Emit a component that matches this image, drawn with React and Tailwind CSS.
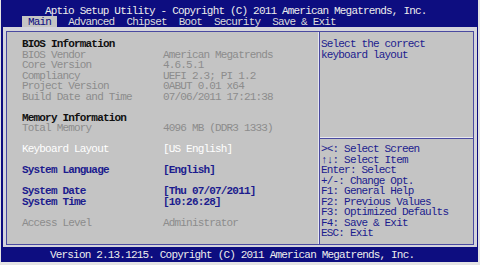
import React from "react";

const Row = ({ children, className = "" }) => (
  <div className={"h-[10.5px] leading-[10.5px] whitespace-pre " + className}>{children}</div>
);

const Item = ({ label, value, lc, vc, extra }) => (
  <div className="flex h-[10.5px] leading-[10.5px] whitespace-pre">
    <div className={"w-[141px] " + lc}>{label}</div>
    <div className={vc}>{value}{extra}</div>
  </div>
);

export default function App() {
  const dim = "text-[#8c8c8c]";
  const blue = "text-[#1c1c8e] font-bold";
  return (
    <div className="w-[480px] h-[265px] bg-[#e4e4e4] pl-px pr-[2px] pb-[3px] font-['Liberation_Mono','DejaVu_Sans_Mono',monospace] text-[11px] tracking-[-0.82px]">
      <div className="h-full bg-[#0d0d80] flex flex-col">
        <div className="h-[16px] pt-[6px] pl-[44px] leading-[11px] text-[#ececec] whitespace-pre">
          Aptio Setup Utility - Copyright (C) 2011 American Megatrends, Inc.
        </div>
        <div className="h-[11px] flex pl-[21px] leading-[12px] text-[#dcdcdc] whitespace-pre">
          <span className="bg-[#c4c4c4] text-[#0d0d80] px-[6px] h-[11px]">Main</span>
          <span className="ml-[11px]">Advanced</span>
          <span className="ml-[12px]">Chipset</span>
          <span className="ml-[12px]">Boot</span>
          <span className="ml-[12px]">Security</span>
          <span className="ml-[12px]">Save &amp; Exit</span>
        </div>
        <div className="flex-1 ml-[2px] mr-px bg-[#d4d4dc] pt-[4px] pb-[2px] pl-[3px] pr-[3px] flex">
          <div className="flex-1 border border-[#4a4aa0] bg-[#c4c4c4] flex">
            <div className="w-[311px] pl-[15px] pt-[7px]">
              <Row className="text-[#111111] font-bold">BIOS Information</Row>
              <Item label="BIOS Vendor" value="American Megatrends" lc={dim} vc={dim} />
              <Item label="Core Version" value="4.6.5.1" lc={dim} vc={dim} />
              <Item label="Compliancy" value="UEFI 2.3; PI 1.2" lc={dim} vc={dim} />
              <Item label="Project Version" value="0ABUT 0.01 x64" lc={dim} vc={dim} />
              <Item label="Build Date and Time" value="07/06/2011 17:21:38" lc={dim} vc={dim} />
              <Row> </Row>
              <Row className="text-[#111111] font-bold">Memory Information</Row>
              <Item label="Total Memory" value="4096 MB (DDR3 1333)" lc={dim} vc={dim} />
              <Row> </Row>
              <Item label="Keyboard Layout" value="[US English]" lc="text-white" vc="text-white" />
              <Row> </Row>
              <Item label="System Language" value="[English]" lc={blue} vc={blue} />
              <Row> </Row>
              <Item label="System Date" value="[Thu 07/07/2011]" lc={blue} vc={blue} />
              <Item
                label="System Time"
                value="[10:26:28"
                lc={blue}
                vc={blue}
                extra={<span className="underline decoration-[#1c1c8e] underline-offset-[1px]">]</span>}
              />
              <Row> </Row>
              <Item label="Access Level" value="Administrator" lc={dim} vc={dim} />
            </div>
            <div className="w-px bg-[#e8e8f0]" />
            <div className="flex-1 border-l border-[#4a4aa0] flex flex-col">
              <div className="h-[105px] pl-[1px] pt-[7px] text-[#1c1c8e]">
                <Row>Select the correct</Row>
                <Row>keyboard layout</Row>
              </div>
              <div className="h-px bg-[#e8e8f0]" />
              <div className="h-px bg-[#4a4aa0]" />
              <div className="pl-[1px] pt-[5px] text-[#1c1c8e]">
                <Row>&gt;&lt;: Select Screen</Row>
                <Row>↑↓: Select Item</Row>
                <Row>Enter: Select</Row>
                <Row>+/-: Change Opt.</Row>
                <Row>F1: General Help</Row>
                <Row>F2: Previous Values</Row>
                <Row>F3: Optimized Defaults</Row>
                <Row>F4: Save &amp; Exit</Row>
                <Row>ESC: Exit</Row>
              </div>
            </div>
          </div>
        </div>
        <div className="h-[15px] pl-[49px] pt-[3px] leading-[11px] text-[#ececec] whitespace-pre">
          Version 2.13.1215. Copyright (C) 2011 American Megatrends, Inc.
        </div>
      </div>
    </div>
  );
}
